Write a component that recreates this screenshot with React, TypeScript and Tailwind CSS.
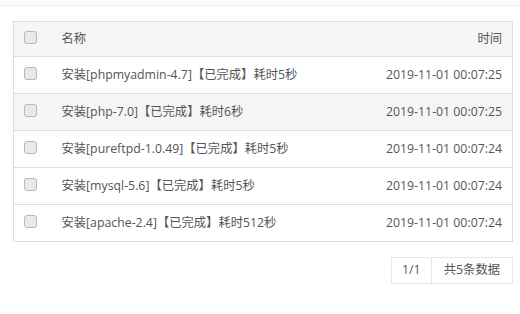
const rows = [
  { name: '安装[phpmyadmin-4.7]【已完成】耗时5秒', time: '2019-11-01 00:07:25' },
  { name: '安装[php-7.0]【已完成】耗时6秒', time: '2019-11-01 00:07:25' },
  { name: '安装[pureftpd-1.0.49]【已完成】耗时5秒', time: '2019-11-01 00:07:24' },
  { name: '安装[mysql-5.6]【已完成】耗时5秒', time: '2019-11-01 00:07:24' },
  { name: '安装[apache-2.4]【已完成】耗时512秒', time: '2019-11-01 00:07:24' },
];

function Check() {
  return <span className="block w-[13px] h-[13px] mb-[4px] rounded-[3px] border border-[#b8b8b8] bg-[#e9e9e9]" />;
}

export default function App() {
  return (
    <div className="w-[520px] h-[314px] bg-white text-[12.3px] text-[#555] font-['Open_Sans','Noto_Sans_CJK_SC',sans-serif]">
      <div className="h-[6px] bg-[#fafafa] border-b border-[#ececec]" />
      <div className="px-[13px] pt-[15px]">
        <table className="w-[500px] border border-[#ddd] border-collapse">
          <thead>
            <tr className="bg-[#f6f6f6] h-[35px] border-b border-[#ddd]">
              <th className="w-[48px] pl-[10px] text-left font-normal"><Check /></th>
              <th className="text-left font-normal">名称</th>
              <th className="text-right font-normal pr-[10px]">时间</th>
            </tr>
          </thead>
          <tbody>
            {rows.map((r, i) => (
              <tr key={i} className={`h-[37px] border-b border-[#ddd] ${i === 1 ? 'bg-[#f5f5f5]' : ''}`}>
                <td className="pl-[10px]"><Check /></td>
                <td>{r.name}</td>
                <td className="text-right pr-[10px]">{r.time}</td>
              </tr>
            ))}
          </tbody>
        </table>
        <div className="flex justify-end mt-[15px] w-[500px]">
          <div className="flex h-[27px] border border-[#e6e6e6]">
            <span className="w-[40px] flex items-center justify-center border-r border-[#e6e6e6]">1/1</span>
            <span className="px-[12px] flex items-center">共5条数据</span>
          </div>
        </div>
      </div>
    </div>
  );
}
